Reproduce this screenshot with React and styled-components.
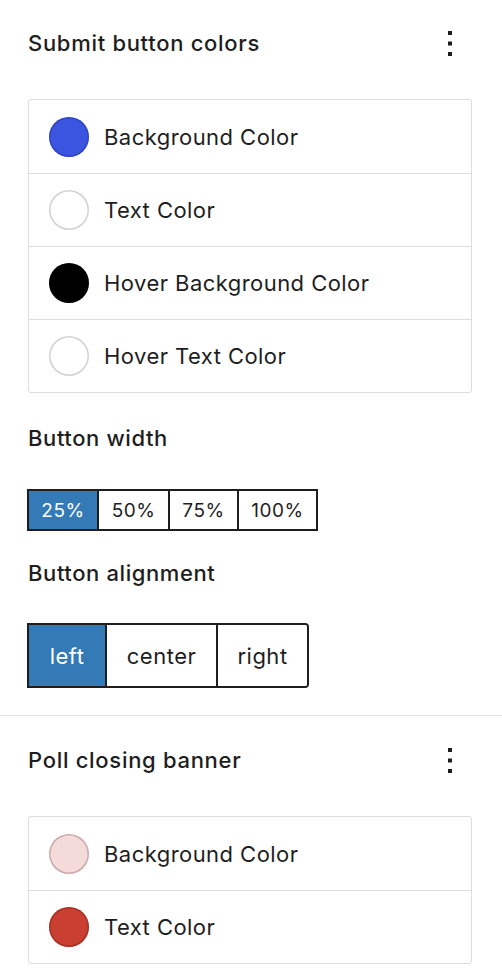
import React from "react";
import styled, { createGlobalStyle } from "styled-components";

const Global = createGlobalStyle`
  html, body { margin: 0; padding: 0; background: #fff; }
  body { font-family: Inter, "Noto Sans", "Liberation Sans", sans-serif; color: #1e1e1e; }
  * { box-sizing: border-box; }
`;

const Panel = styled.div`
  width: 502px;
  display: flex;
  flex-direction: column;
`;

const Section = styled.section`
  display: flex;
  flex-direction: column;
  padding: ${(p) => p.$pad || "16px 30px 0 28px"};
`;

const Header = styled.div`
  height: 54px;
  display: flex;
  align-items: center;
  justify-content: space-between;
`;

const Title = styled.h2`
  margin: 0;
  font-size: 22px;
  line-height: 24px;
  font-weight: 500;
  letter-spacing: 0.7px;
`;

const MenuButton = styled.button`
  width: 24px;
  height: 32px;
  margin-right: 10px;
  border: 0;
  background: none;
  padding: 0;
  display: flex;
  align-items: center;
  justify-content: center;
  color: #1e1e1e;
`;

const ColorList = styled.div`
  margin-top: ${(p) => p.$mt || 29}px;
  border: 1px solid #dcdcde;
  border-radius: 3px;
  display: flex;
  flex-direction: column;
`;

const ColorRow = styled.div`
  height: 73px;
  display: flex;
  align-items: center;
  gap: 15px;
  padding-left: 20px;
  & + & { border-top: 1px solid #dcdcde; }
`;

const Swatch = styled.span`
  width: 40px;
  height: 40px;
  border-radius: 50%;
  background: ${(p) => p.$color};
  box-shadow: inset 0 0 0 1.5px ${(p) => p.$ring || "rgba(0,0,0,0.18)"};
  flex: none;
`;

const RowLabel = styled.span`
  font-size: 22px;
  line-height: 24px;
  letter-spacing: 0.45px;
`;

const FieldLabel = styled.div`
  margin-top: ${(p) => p.$mt}px;
  font-size: 22px;
  line-height: 24px;
  font-weight: 500;
  letter-spacing: 0.6px;
`;

const Group = styled.div`
  margin-top: ${(p) => p.$mt}px;
  margin-left: -1px;
  display: flex;
  align-self: flex-start;
  border: 2px solid #1e1e1e;
  border-radius: ${(p) => p.$radius || "0"};
  overflow: hidden;
`;

const Seg = styled.button`
  flex: none;
  width: ${(p) => p.$w}px;
  height: ${(p) => p.$h}px;
  border: 0;
  margin: 0;
  padding: 0;
  font-family: inherit;
  font-size: ${(p) => p.$fs}px;
  letter-spacing: 0.5px;
  background: ${(p) => (p.$active ? "#337ab7" : "#fff")};
  color: ${(p) => (p.$active ? "#fff" : "#1e1e1e")};
  & + & { border-left: 2px solid #1e1e1e; }
`;

const Divider = styled.hr`
  margin: 27px 0 0;
  border: 0;
  border-top: 1px solid #e0e0e0;
  width: 100%;
`;

const Dots = () => (
  <svg width="8" height="28" viewBox="0 0 8 28" aria-hidden="true">
    <rect x="2" y="2" width="4" height="4" fill="currentColor" />
    <rect x="2" y="12.5" width="4" height="4" fill="currentColor" />
    <rect x="2" y="23" width="4" height="4" fill="currentColor" />
  </svg>
);

const submitColors = [
  { label: "Background Color", color: "#3b55e0", ring: "rgba(30,40,140,0.35)" },
  { label: "Text Color", color: "#ffffff" },
  { label: "Hover Background Color", color: "#000000" },
  { label: "Hover Text Color", color: "#ffffff" },
];

const bannerColors = [
  { label: "Background Color", color: "#f3dbd9", ring: "rgba(120,60,60,0.3)" },
  { label: "Text Color", color: "#c94032", ring: "rgba(110,20,10,0.35)" },
];

const widths = [
  { l: "25%", w: 68, active: true },
  { l: "50%", w: 71 },
  { l: "75%", w: 69 },
  { l: "100%", w: 79 },
];

const aligns = [
  { l: "left", w: 76, active: true },
  { l: "center", w: 111 },
  { l: "right", w: 91 },
];

export default function App() {
  return (
    <>
      <Global />
      <Panel>
        <Section>
          <Header>
            <Title>Submit button colors</Title>
            <MenuButton aria-label="Options"><Dots /></MenuButton>
          </Header>
          <ColorList>
            {submitColors.map((c) => (
              <ColorRow key={c.label}>
                <Swatch $color={c.color} $ring={c.ring} />
                <RowLabel>{c.label}</RowLabel>
              </ColorRow>
            ))}
          </ColorList>
          <FieldLabel $mt={33}>Button width</FieldLabel>
          <Group $mt={39}>
            {widths.map((b) => (
              <Seg key={b.l} $w={b.w} $h={38} $fs={19} $active={b.active}>{b.l}</Seg>
            ))}
          </Group>
          <FieldLabel $mt={30}>Button alignment</FieldLabel>
          <Group $mt={38} $radius="0 4px 4px 0">
            {aligns.map((b) => (
              <Seg key={b.l} $w={b.w} $h={61} $fs={22} $active={b.active}>{b.l}</Seg>
            ))}
          </Group>
        </Section>
        <Divider />
        <Section $pad="17px 30px 0 28px">
          <Header>
            <Title>Poll closing banner</Title>
            <MenuButton aria-label="Options"><Dots /></MenuButton>
          </Header>
          <ColorList $mt={29}>
            {bannerColors.map((c) => (
              <ColorRow key={c.label}>
                <Swatch $color={c.color} $ring={c.ring} />
                <RowLabel>{c.label}</RowLabel>
              </ColorRow>
            ))}
          </ColorList>
        </Section>
      </Panel>
    </>
  );
}
